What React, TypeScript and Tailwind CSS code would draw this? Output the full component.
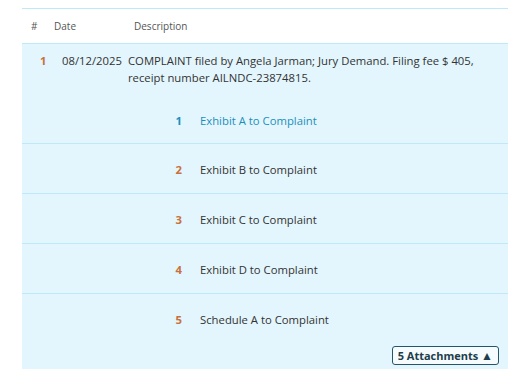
const attachments = [
  { n: 1, title: 'Exhibit A to Complaint', active: true },
  { n: 2, title: 'Exhibit B to Complaint' },
  { n: 3, title: 'Exhibit C to Complaint' },
  { n: 4, title: 'Exhibit D to Complaint' },
  { n: 5, title: 'Schedule A to Complaint' },
];

export default function App() {
  return (
    <div className="bg-white w-[528px] h-[377px] pt-2 pl-[22px] font-['Open_Sans',sans-serif] text-[11.3px] text-[#333]">
      <div className="w-[486px] border-t border-[#bde9f8]">
        {/* column headings */}
        <div className="flex items-center h-[35px] border-b border-[#bde9f8] text-[10px] text-[#555]">
          <span className="w-8 pl-[9px]">#</span>
          <span className="w-20">Date</span>
          <span>Description</span>
        </div>

        <div className="bg-[#e3f6fd]">
          <div className="flex pt-[8px] leading-[17px]">
            <span className="w-10 pl-[18px] font-bold text-[#c8703a]">1</span>
            <span className="w-[66px]">08/12/2025</span>
            <p className="flex-1 pr-5">
              COMPLAINT filed by Angela Jarman; Jury Demand. Filing fee $ 405, receipt number AILNDC-23874815.
            </p>
          </div>

          <div className="mt-[10px]">
            {attachments.map((a) => (
              <div
                key={a.n}
                className={`flex items-center ${a.n === 1 ? 'h-[48px] pt-[4px]' : 'h-[50px] pt-[3px]'} ${a.n < attachments.length ? 'border-b border-[#bde9f8]' : ''}`}
              >
                <span className={`w-[178px] text-right pr-[18px] font-bold ${a.active ? 'text-[#1b8fbb]' : 'text-[#c8703a]'}`}>
                  {a.n}
                </span>
                <span className={a.active ? 'text-[#1b8fbb]' : ''}>{a.title}</span>
              </div>
            ))}
          </div>

          <div className="flex justify-end pr-[9px] pt-[2px] pb-[4px]">
            <button className="h-[19px] px-[5px] rounded-[3px] border border-[#24556a] bg-[#f6fcfe] text-[11px] font-bold text-[#1d3d4d] leading-none">
              5 Attachments <span className="text-[12px]">▲</span>
            </button>
          </div>
        </div>
      </div>
    </div>
  );
}
